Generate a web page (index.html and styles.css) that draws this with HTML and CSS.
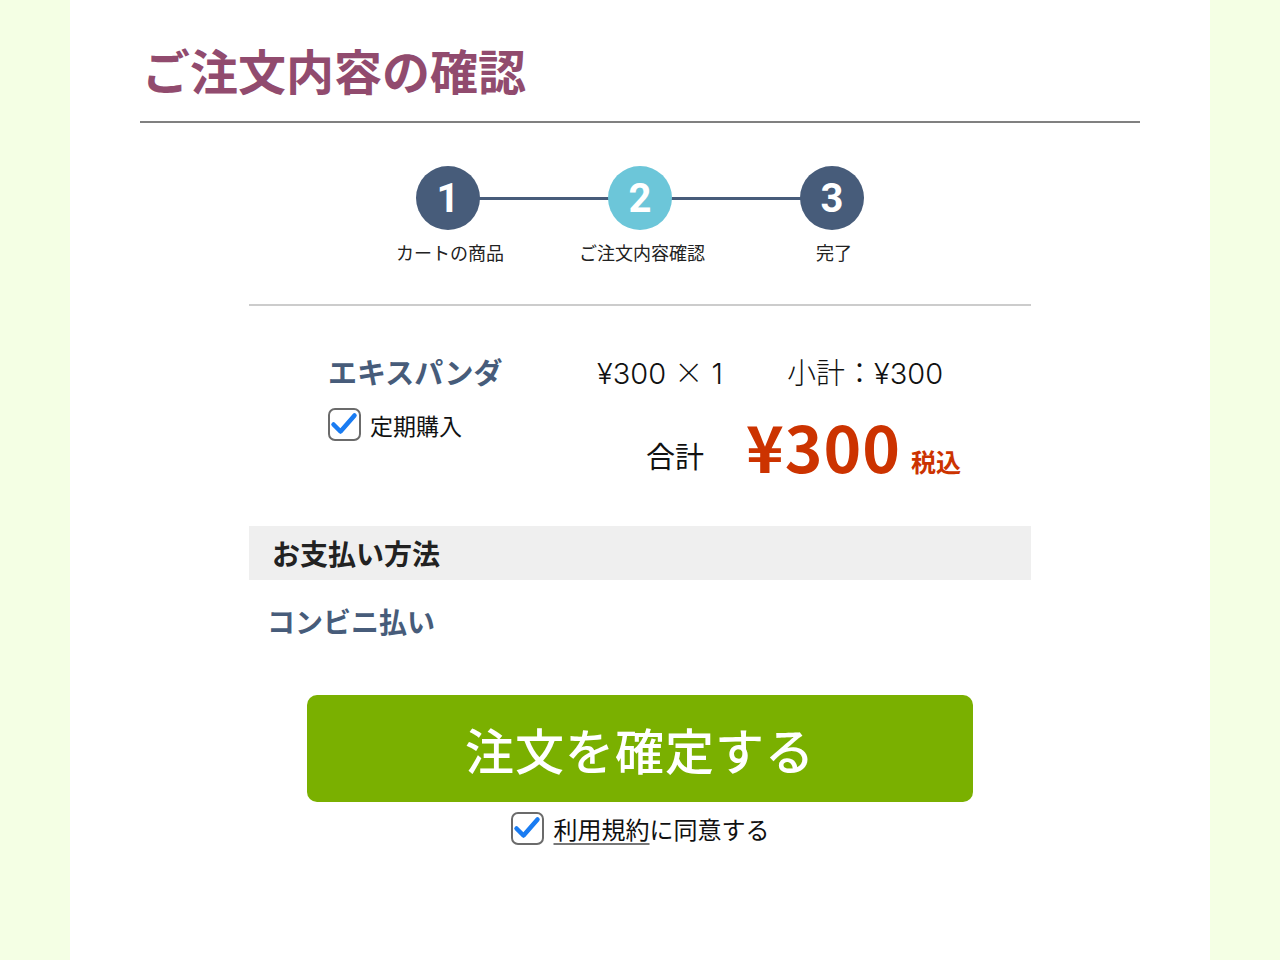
FILE: index.html
```html
<!DOCTYPE html>
<html lang="ja">
<head>
  <meta charset="UTF-8">
  <title>ご注文内容の確認</title>
  <link rel="stylesheet" href="styles.css">
</head>
<body>
  <div class="container">
    <h1 class="page-title">ご注文内容の確認</h1>

    <ol class="steps">
      <li class="step done"><span class="step-num">1</span><span class="step-label">カートの商品</span></li>
      <li class="step current"><span class="step-num">2</span><span class="step-label">ご注文内容確認</span></li>
      <li class="step"><span class="step-num">3</span><span class="step-label">完了</span></li>
    </ol>

    <div class="section">
      <div class="order-item">
        <div class="item-left">
          <div class="item-name">エキスパンダ</div>
          <label class="check">
            <svg class="checkbox" width="33" height="33" viewBox="0 0 33 33">
              <rect x="1" y="1" width="31" height="31" rx="6" fill="#fff" stroke="#6b6b6b" stroke-width="2"/>
              <path d="M5.5 16.5 L12.5 23.5 L26.5 7.5" fill="none" stroke="#1a7cf2" stroke-width="4.5" stroke-linecap="round" stroke-linejoin="round"/>
            </svg>
            <span>定期購入</span>
          </label>
        </div>
        <div class="item-right">
          <div class="price-row">
            <span class="unit-price">¥300 <span class="times">×</span> 1</span>
            <span class="subtotal">小計：¥300</span>
          </div>
          <div class="total-row">
            <span class="total-label">合計</span>
            <span class="total-price">¥300</span>
            <span class="tax">税込</span>
          </div>
        </div>
      </div>

      <h2 class="section-head">お支払い方法</h2>
      <p class="payment">コンビニ払い</p>
    </div>

    <div class="actions">
      <button class="confirm-btn" type="button">注文を確定する</button>
      <label class="check agree">
        <svg class="checkbox" width="33" height="33" viewBox="0 0 33 33">
          <rect x="1" y="1" width="31" height="31" rx="6" fill="#fff" stroke="#6b6b6b" stroke-width="2"/>
          <path d="M5.5 16.5 L12.5 23.5 L26.5 7.5" fill="none" stroke="#1a7cf2" stroke-width="4.5" stroke-linecap="round" stroke-linejoin="round"/>
        </svg>
        <span><a class="terms" href="#">利用規約</a>に同意する</span>
      </label>
    </div>
  </div>
</body>
</html>
```

FILE: styles.css
```css
html, body { margin: 0; padding: 0; }
body { background: #f4ffe4; font-family: "Noto Sans CJK JP", "Noto Sans", sans-serif; color: #111; }
.container { width: 1000px; min-height: 960px; margin: 0 auto; background: #fff; padding: 39px 70px 0; box-sizing: content-box; }

.page-title { margin: 0; padding: 0 0 22px 2px; font-size: 48px; line-height: 60px; font-weight: 700; color: #914b6e; border-bottom: 2px solid #808080; }

.steps { list-style: none; margin: 43px 0 0; padding: 0; display: grid; grid-template-columns: repeat(3, 192px); justify-content: center; }
.step { position: relative; display: flex; flex-direction: column; align-items: center; }
.step:not(:last-child)::after { content: ""; position: absolute; top: 31px; left: 50%; width: 100%; height: 3px; background: #475c7a; z-index: 0; }
.step-num { position: relative; z-index: 1; width: 64px; height: 64px; border-radius: 50%; background: #475c7a; color: #fff; display: flex; align-items: center; justify-content: center; font-family: Roboto, "Noto Sans", sans-serif; font-size: 40px; font-weight: 700; }
.step.current .step-num { background: #6cc6d9; }
.step-label { margin: 10px 0 0 4px; font-size: 18px; line-height: 24px; color: #222; }

.section { width: 782px; margin: 40px auto 0; border-top: 2px solid #ccc; }

.order-item { display: flex; padding: 45px 0 0 79px; }
.item-left { width: 269px; }
.item-name { font-size: 29px; line-height: 40px; font-weight: 700; color: #475c7a; }
.check { display: flex; align-items: center; gap: 9px; font-size: 23px; line-height: 32px; color: #111; }
.item-left .check { margin-top: 17px; }
.checkbox { display: block; flex: none; }

.price-row { display: flex; padding-top: 3px; font-family: Inter, "Noto Sans CJK JP", sans-serif; font-size: 29px; line-height: 40px; font-weight: 300; }
.unit-price { width: 190px; }
.times { font-family: "Noto Sans CJK JP", sans-serif; font-weight: 300; line-height: 0; }
.total-row { display: flex; align-items: center; margin: 16px 0 0 49px; }
.total-label { font-size: 29px; line-height: 40px; padding-top: 20px; margin-right: 42px; }
.total-price { font-size: 64px; line-height: 70px; font-weight: 700; color: #cc3300; letter-spacing: 1px; }
.tax { font-size: 25px; line-height: 32px; padding-top: 32px; font-weight: 700; color: #cc3300; margin-left: 10px; }

.section-head { margin: 46px 0 0; padding: 0 23px; height: 54px; line-height: 54px; background: #efefef; font-size: 28px; font-weight: 700; color: #222; }
.payment { margin: 21px 0 0 18px; font-size: 28px; line-height: 40px; font-weight: 700; color: #475c7a; }

.actions { display: flex; flex-direction: column; align-items: center; margin-top: 54px; }
.confirm-btn { width: 666px; height: 107px; border: 0; border-radius: 10px; background: #7ab000; color: #fff; font-family: inherit; font-size: 49px; font-weight: 500; letter-spacing: 1px; cursor: pointer; }
.agree { margin-top: 10px; gap: 10px; font-size: 24px; }
.terms { color: #111; text-decoration: underline; text-decoration-color: #777; text-underline-offset: 4px; text-decoration-thickness: 2px; }
```
